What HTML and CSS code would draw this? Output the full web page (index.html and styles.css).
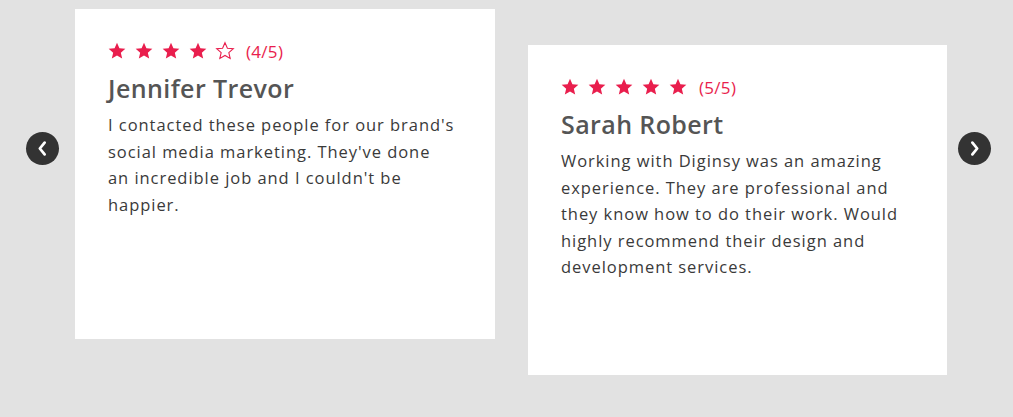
FILE: index.html
```html
<!DOCTYPE html>
<html lang="en">
<head>
<meta charset="utf-8">
<title>Testimonials</title>
<link rel="stylesheet" href="styles.css">
</head>
<body>
<section class="carousel">
  <button class="arrow arrow-left" aria-label="Previous">
    <svg viewBox="0 0 16 16" width="17" height="17"><path d="M10 2.5 L5.5 8 L10 13.5" fill="none" stroke="#fff" stroke-width="2.6" stroke-linecap="round" stroke-linejoin="round"/></svg>
  </button>
  <div class="track">
    <article class="card card-a">
      <div class="rating">
        <svg class="star" viewBox="0 0 24 24"><polygon points="12,2 14.9,8.6 22,9.3 16.6,14 18.2,21 12,17.3 5.8,21 7.4,14 2,9.3 9.1,8.6"/></svg>
        <svg class="star" viewBox="0 0 24 24"><polygon points="12,2 14.9,8.6 22,9.3 16.6,14 18.2,21 12,17.3 5.8,21 7.4,14 2,9.3 9.1,8.6"/></svg>
        <svg class="star" viewBox="0 0 24 24"><polygon points="12,2 14.9,8.6 22,9.3 16.6,14 18.2,21 12,17.3 5.8,21 7.4,14 2,9.3 9.1,8.6"/></svg>
        <svg class="star" viewBox="0 0 24 24"><polygon points="12,2 14.9,8.6 22,9.3 16.6,14 18.2,21 12,17.3 5.8,21 7.4,14 2,9.3 9.1,8.6"/></svg>
        <svg class="star empty" viewBox="0 0 24 24"><polygon points="12,2 14.9,8.6 22,9.3 16.6,14 18.2,21 12,17.3 5.8,21 7.4,14 2,9.3 9.1,8.6"/></svg>
        <span class="score">(4/5)</span>
      </div>
      <h3 class="name">Jennifer Trevor</h3>
      <p class="quote">I contacted these people for our brand's<br>social media marketing. They've done<br>an incredible job and I couldn't be<br>happier.</p>
    </article>
    <article class="card card-b">
      <div class="rating">
        <svg class="star" viewBox="0 0 24 24"><polygon points="12,2 14.9,8.6 22,9.3 16.6,14 18.2,21 12,17.3 5.8,21 7.4,14 2,9.3 9.1,8.6"/></svg>
        <svg class="star" viewBox="0 0 24 24"><polygon points="12,2 14.9,8.6 22,9.3 16.6,14 18.2,21 12,17.3 5.8,21 7.4,14 2,9.3 9.1,8.6"/></svg>
        <svg class="star" viewBox="0 0 24 24"><polygon points="12,2 14.9,8.6 22,9.3 16.6,14 18.2,21 12,17.3 5.8,21 7.4,14 2,9.3 9.1,8.6"/></svg>
        <svg class="star" viewBox="0 0 24 24"><polygon points="12,2 14.9,8.6 22,9.3 16.6,14 18.2,21 12,17.3 5.8,21 7.4,14 2,9.3 9.1,8.6"/></svg>
        <svg class="star" viewBox="0 0 24 24"><polygon points="12,2 14.9,8.6 22,9.3 16.6,14 18.2,21 12,17.3 5.8,21 7.4,14 2,9.3 9.1,8.6"/></svg>
        <span class="score">(5/5)</span>
      </div>
      <h3 class="name">Sarah Robert</h3>
      <p class="quote">Working with Diginsy was an amazing<br>experience. They are professional and<br>they know how to do their work. Would<br>highly recommend their design and<br>development services.</p>
    </article>
  </div>
  <button class="arrow arrow-right" aria-label="Next">
    <svg viewBox="0 0 16 16" width="17" height="17"><path d="M6 2.5 L10.5 8 L6 13.5" fill="none" stroke="#fff" stroke-width="2.6" stroke-linecap="round" stroke-linejoin="round"/></svg>
  </button>
</section>
</body>
</html>
```

FILE: styles.css
```css
* { box-sizing: border-box; }
html, body {
  margin: 0;
  padding: 0;
  background: #e2e2e2;
  height: 417px;
  overflow: hidden;
  font-family: "Open Sans", "Liberation Sans", sans-serif;
}
.carousel {
  display: flex;
  align-items: flex-start;
  padding: 0 21px 0 26px;
  height: 417px;
}
.arrow {
  flex: none;
  width: 33px;
  height: 33px;
  border-radius: 50%;
  border: none;
  background: #333333;
  display: flex;
  align-items: center;
  justify-content: center;
  padding: 0;
  margin-top: 132px;
  cursor: pointer;
}
.track {
  display: flex;
  align-items: flex-start;
  gap: 33px;
  padding: 0 11px 0 16px;
}
.card {
  width: 420px;
  height: 330px;
  background: #ffffff;
  padding: 32px 33px;
}
.card-a { margin-top: 9px; }
.card-b { margin-top: 45px; width: 419px; }
.rating {
  display: flex;
  align-items: center;
  height: 20px;
}
.star {
  width: 20px;
  height: 20px;
  margin-right: 8px;
  fill: #e91e4d;
  margin-left: -1px;
}
.star.empty {
  fill: none;
  stroke: #e91e4d;
  stroke-width: 1.3;
}
.score {
  color: #e91e4d;
  font-size: 17px;
  margin-left: 3px;
  letter-spacing: 0.3px;
}
.name {
  margin: 12px 0 0;
  font-size: 25px;
  font-weight: 600;
  color: #555555;
  line-height: 30px;
  letter-spacing: 0.4px;
}
.quote {
  margin: 9px 0 0;
  font-size: 16.5px;
  line-height: 26.5px;
  color: #3a3a3a;
  letter-spacing: 0.95px;
  white-space: nowrap;
}
```
